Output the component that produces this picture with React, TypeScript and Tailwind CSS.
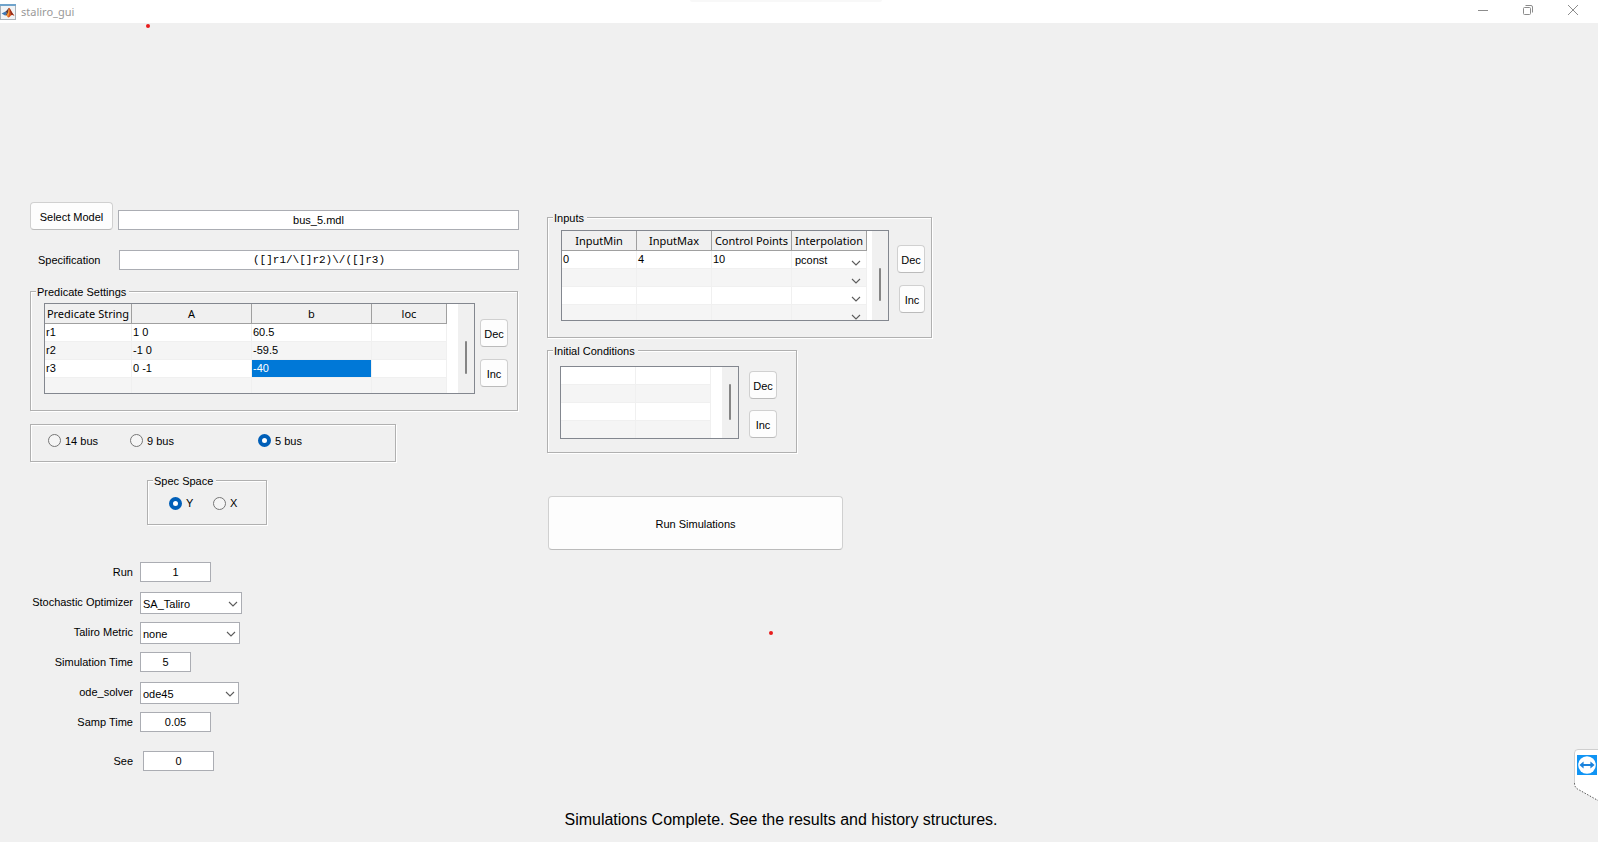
import { useState, type ReactNode } from "react";

const cx = (...parts: (string | false | undefined)[]) => parts.filter(Boolean).join(" ");

function Chevron({ className }: { className?: string }) {
  return (
    <svg viewBox="0 0 10 6" aria-hidden="true" className={cx("pointer-events-none h-[6px] w-[10px]", className)}>
      <path d="M1 1 L5 5 L9 1" fill="none" stroke="#5c5c5c" strokeWidth="1.1" />
    </svg>
  );
}

function PushButton({ children, className, label }: { children: ReactNode; className: string; label?: string }) {
  return (
    <button
      type="button"
      aria-label={label}
      className={cx(
        "shrink-0 rounded-[4px] border border-[#d0d0d0] border-b-[#bbbbbb] bg-[#fdfdfd] pt-[2px] whitespace-nowrap hover:bg-[#f5faff]",
        className,
      )}
    >
      {children}
    </button>
  );
}

function Panel({ title, className, children }: { title?: string; className: string; children: ReactNode }) {
  return (
    <fieldset
      className={cx(
        "min-w-0 border border-[#b0b0b0] shadow-[1px_1px_0_#ffffff,inset_1px_1px_0_#ffffff]",
        className,
      )}
    >
      {title && <legend className="ml-[5px] bg-[#f0f0f0] pt-[2px] pr-[3px] pl-px leading-4">{title}</legend>}
      {children}
    </fieldset>
  );
}

function Steppers({ name, className, incClass }: { name: string; className: string; incClass?: string }) {
  return (
    <div className={cx("flex flex-col items-end", className)}>
      <PushButton label={`Dec ${name}`} className="h-7 w-7">Dec</PushButton>
      <PushButton label={`Inc ${name}`} className={cx("h-7", incClass ?? "w-7")}>Inc</PushButton>
    </div>
  );
}

function TableFrame({ className, thumb, children }: { className: string; thumb: string; children: ReactNode }) {
  return (
    <div className={cx("flex shrink-0 overflow-hidden border border-[#83878f] bg-white", className)}>
      {children}
      <div className="ml-auto flex w-4 justify-center bg-[#f0f0f0]">
        <div className={cx("w-[2px] rounded-full bg-[#858585]", thumb)} />
      </div>
    </div>
  );
}

const TH =
  "h-5 overflow-hidden border-r border-b border-[#a0a0a0] bg-[#f0f0f0] p-0 pt-px text-center font-['Noto_Sans','Open_Sans',sans-serif] text-[11px] leading-[18px] font-normal whitespace-nowrap";
const TD = "h-[18px] border-r border-b border-[#f0f0f0] p-0 pl-px leading-[17px] whitespace-nowrap";

const predicates = [
  ["r1", "1 0", "60.5", ""],
  ["r2", "-1 0", "-59.5", ""],
  ["r3", "0 -1", "-40", ""],
  ["", "", "", ""],
];

function PredicateTable() {
  const [selected, setSelected] = useState("2-2");
  return (
    <table className="w-[402px] table-fixed border-separate border-spacing-0 self-start">
      <colgroup>
        <col className="w-[87px]" />
        <col className="w-[120px]" />
        <col className="w-[120px]" />
        <col className="w-[75px]" />
      </colgroup>
      <thead>
        <tr>
          {["Predicate String", "A", "b", "loc"].map((h) => (
            <th key={h} scope="col" className={TH}>{h}</th>
          ))}
        </tr>
      </thead>
      <tbody>
        {predicates.map((row, r) => (
          <tr key={r} className="odd:bg-white even:bg-[#f5f5f5]">
            {row.map((value, c) => {
              const key = `${r}-${c}`;
              return (
                <td
                  key={key}
                  onClick={() => setSelected(key)}
                  className={cx(TD, "bg-clip-padding", selected === key && "bg-[#0078d7] text-white")}
                >
                  {value}
                </td>
              );
            })}
          </tr>
        ))}
      </tbody>
    </table>
  );
}

const inputRows = [
  ["0", "4", "10", "pconst"],
  ["", "", "", ""],
  ["", "", "", ""],
  ["", "", "", ""],
];

function InputsTable() {
  return (
    <table className="w-[305px] table-fixed border-separate border-spacing-0 self-start">
      <colgroup>
        <col className="w-[75px]" />
        <col className="w-[75px]" />
        <col className="w-[80px]" />
        <col className="w-[75px]" />
      </colgroup>
      <thead>
        <tr>
          {["InputMin", "InputMax", "Control Points", "Interpolation"].map((h) => (
            <th key={h} scope="col" className={TH}>{h}</th>
          ))}
        </tr>
      </thead>
      <tbody>
        {inputRows.map((row, r) => (
          <tr key={r} className="odd:bg-white even:bg-[#f5f5f5]">
            {row.slice(0, 3).map((value, c) => (
              <td key={c} className={TD}>{value}</td>
            ))}
            <td className={TD}>
              <div className="relative">
                <select
                  aria-label={`Interpolation ${r + 1}`}
                  defaultValue={row[3]}
                  className="block h-[17px] w-full appearance-none bg-transparent pt-px pl-[2px] outline-none"
                >
                  <option value={row[3]}>{row[3]}</option>
                  <option value="linear">linear</option>
                </select>
                <Chevron className="absolute right-[5px] bottom-[2px]" />
              </div>
            </td>
          </tr>
        ))}
      </tbody>
    </table>
  );
}

function ConditionsTable() {
  return (
    <table aria-label="Initial Conditions" className="w-[150px] table-fixed border-separate border-spacing-0 self-start">
      <tbody>
        {[0, 1, 2, 3].map((r) => (
          <tr key={r} className="odd:bg-white even:bg-[#f5f5f5]">
            <td className={TD} />
            <td className={TD} />
          </tr>
        ))}
      </tbody>
    </table>
  );
}

function Radio({ name, label, checked, className }: { name: string; label: string; checked?: boolean; className?: string }) {
  return (
    <label className={cx("flex items-center gap-1 leading-4", className)}>
      <input
        type="radio"
        name={name}
        defaultChecked={checked}
        className="h-[13px] w-[13px] appearance-none rounded-full border border-[#767676] bg-[#f5f5f5] checked:border-4 checked:border-[#005fb8] checked:bg-white"
      />
      {label}
    </label>
  );
}

const FIELD = "h-5 min-w-0 border border-[#abadb3] bg-white text-center outline-none focus:border-[#0078d7]";

function FormRow({ id, label, children, className }: { id: string; label: string; children: ReactNode; className?: string }) {
  return (
    <div className={cx("flex h-[30px] items-start gap-[7px]", className)}>
      <label htmlFor={id} className="w-[103px] text-right leading-5 whitespace-nowrap">{label}</label>
      {children}
    </div>
  );
}

function Dropdown({ id, value, width }: { id: string; value: string; width: string }) {
  return (
    <div className={cx("relative", width)}>
      <select
        id={id}
        defaultValue={value}
        className="block h-[22px] w-full appearance-none border border-[#abadb3] bg-white pt-[2px] pl-[2px] outline-none focus:border-[#0078d7]"
      >
        <option value={value}>{value}</option>
      </select>
      <Chevron className="absolute top-[9px] right-1" />
    </div>
  );
}

function TitleBar() {
  return (
    <header className="relative flex h-[23px] shrink-0 items-center bg-white">
      <div className="absolute top-0 left-[690px] h-[2px] w-[192px] rounded-b bg-[#f8f8f8]" />
      <svg viewBox="0 0 16 16" className="h-4 w-4" aria-hidden="true">
        <rect x="0.5" y="0.5" width="15" height="15" fill="#f1f3f5" stroke="#a9b1b8" />
        <rect x="0" y="0" width="16" height="2" fill="#6fa3cb" />
        <path d="M1.6 9.6 L5.4 7.4 L7.2 9.2 L5 11.4 Z" fill="#3d78b4" />
        <path d="M5.4 7.4 C7 7.2 7.8 4.6 9 3.8 L8.4 9 L7 11 L5 11.4 L7 9.2 Z" fill="#5b3a3a" />
        <path d="M9 3.8 C10.4 4.2 11.8 8.8 14.4 11.8 C12.6 10.8 11.4 10.8 10.2 12.2 C9.4 13.2 8.6 13.6 8 13.6 C7.6 12.2 6.8 11.4 6 11.2 C8 10.4 8.4 6 9 3.8 Z" fill="#d9541e" />
        <path d="M9 4.4 C9.6 6.4 9.4 10 8 13.2 C7.6 12 7 11.4 6.4 11.2 C8 10 8.6 7 9 4.4 Z" fill="#f5a33a" />
        <path d="M9.6 4.6 C10.6 5.6 12.2 9.6 14.4 11.8 C12.6 10.8 11.8 10.6 11 11 Z" fill="#8f2a1c" />
      </svg>
      <h1 className="ml-[5px] font-['Noto_Sans','Open_Sans',sans-serif] text-[11px] leading-4 text-[#999999]">staliro_gui</h1>
      <div className="ml-auto flex items-center gap-[35px] pr-5 pb-[3px]">
        <button type="button" aria-label="Minimize" className="h-[10px] w-[10px]">
          <svg viewBox="0 0 10 10" className="h-full w-full"><path d="M0 5.5 H10" stroke="#8c8c8c" /></svg>
        </button>
        <button type="button" aria-label="Restore" className="h-[10px] w-[10px]">
          <svg viewBox="0 0 10 10" className="h-full w-full" fill="none" stroke="#8c8c8c">
            <rect x="0.5" y="2.5" width="7" height="7" rx="1" />
            <path d="M2.5 0.5 H8 Q9.5 0.5 9.5 2 V7.5" />
          </svg>
        </button>
        <button type="button" aria-label="Close" className="h-[10px] w-[10px]">
          <svg viewBox="0 0 10 10" className="h-full w-full"><path d="M0 0 L10 10 M10 0 L0 10" stroke="#8c8c8c" /></svg>
        </button>
      </div>
    </header>
  );
}

function RemoteTab() {
  return (
    <svg viewBox="0 0 24 52" className="absolute top-[749px] right-0 h-[52px] w-6" aria-hidden="true">
      <path d="M24 0.5 H4 Q0.5 0.5 0.5 4 V34 Q0.5 38 3.5 40 L24 51.5 Z" fill="#ffffff" />
      <path d="M24 0.5 H4 Q0.5 0.5 0.5 4 V34" fill="none" stroke="#c4c4c4" strokeWidth="0.8" />
      <path d="M0.5 34 Q0.5 38 3.5 40 L24 51.5" fill="none" stroke="#555555" strokeDasharray="1.5 1.5" />
      <rect x="3" y="6" width="20" height="20" fill="#1094f4" />
      <circle cx="13" cy="16" r="8.8" fill="#ffffff" />
      <path d="M5.4 16 L9.6 12.4 V15 H16.4 V12.4 L20.6 16 L16.4 19.6 V17 H9.6 V19.6 Z" fill="#1a82dc" />
    </svg>
  );
}

export default function App() {
  return (
    <div className="relative flex min-h-screen flex-col bg-[#f0f0f0] font-['Liberation_Sans',Arial,sans-serif] text-[11px] text-black">
      <TitleBar />
      <span className="absolute top-6 left-[146px] h-1 w-1 rounded-full bg-[#e81c1c]" />
      <span className="absolute top-[631px] left-[769px] h-1 w-1 rounded-full bg-[#e81c1c]" />
      <RemoteTab />

      <main className="flex flex-1 items-start gap-7 px-[30px] pt-[179px]">
        <section className="w-full max-w-[489px]">
          <div className="flex items-end gap-[5px]">
            <PushButton className="h-7 w-[83px]">Select Model</PushButton>
            <input aria-label="Model" defaultValue="bus_5.mdl" className={cx(FIELD, "flex-1")} />
          </div>
          <div className="mt-5 flex items-center pl-2">
            <label htmlFor="spec" className="w-[81px] leading-5">Specification</label>
            <input
              id="spec"
              defaultValue="([]r1/\[]r2)\/([]r3)"
              className={cx(FIELD, "flex-1 font-['Liberation_Mono',monospace]")}
            />
          </div>

          <Panel title="Predicate Settings" className="mt-3 mr-px">
            <div className="flex gap-[5px] pt-[3px] pb-4 pl-[13px]">
              <TableFrame className="h-[91px] w-[431px]" thumb="mt-[37px] h-[33px]">
                <PredicateTable />
              </TableFrame>
              <Steppers name="predicates" className="gap-3 pt-4" />
            </div>
          </Panel>

          <Panel className="mt-[13px] w-[366px]">
            <div className="flex h-9 items-center pb-[5px] pl-[17px]">
              <Radio name="bus" label="14 bus" className="w-[82px]" />
              <Radio name="bus" label="9 bus" className="w-32" />
              <Radio name="bus" label="5 bus" checked />
            </div>
          </Panel>

          <Panel title="Spec Space" className="mt-[9px] ml-[117px] w-[120px]">
            <div className="flex h-[35px] items-start pt-[6px] pl-[21px]">
              <Radio name="space" label="Y" checked className="w-11" />
              <Radio name="space" label="X" />
            </div>
          </Panel>

          <form className="mt-[37px]" onSubmit={(e) => e.preventDefault()}>
            <FormRow id="run" label="Run">
              <input id="run" defaultValue="1" className={cx(FIELD, "w-[71px]")} />
            </FormRow>
            <FormRow id="optimizer" label="Stochastic Optimizer">
              <Dropdown id="optimizer" value="SA_Taliro" width="w-[102px]" />
            </FormRow>
            <FormRow id="metric" label="Taliro Metric">
              <Dropdown id="metric" value="none" width="w-[100px]" />
            </FormRow>
            <FormRow id="simtime" label="Simulation Time">
              <input id="simtime" defaultValue="5" className={cx(FIELD, "w-[51px]")} />
            </FormRow>
            <FormRow id="solver" label="ode_solver">
              <Dropdown id="solver" value="ode45" width="w-[99px]" />
            </FormRow>
            <FormRow id="samp" label="Samp Time">
              <input id="samp" defaultValue="0.05" className={cx(FIELD, "w-[71px]")} />
            </FormRow>
            <FormRow id="see" label="See" className="mt-[9px] gap-[10px]">
              <input id="see" defaultValue="0" className={cx(FIELD, "w-[71px]")} />
            </FormRow>
          </form>
        </section>

        <section className="w-full max-w-[385px] pt-[6px]">
          <Panel title="Inputs" className="w-full">
            <div className="flex gap-2 pt-1 pb-4 pl-[13px]">
              <TableFrame className="h-[91px] w-[328px]" thumb="mt-[37px] h-[33px]">
                <InputsTable />
              </TableFrame>
              <Steppers name="inputs" className="gap-3 pt-[15px]" incClass="w-[26px]" />
            </div>
          </Panel>

          <Panel title="Initial Conditions" className="mt-[3px] w-[250px]">
            <div className="flex gap-[10px] pt-[7px] pb-[13px] pl-3">
              <TableFrame className="h-[73px] w-[179px]" thumb="mt-[17px] h-9">
                <ConditionsTable />
              </TableFrame>
              <Steppers name="conditions" className="gap-[11px] pt-[5px]" />
            </div>
          </Panel>

          <PushButton className="mt-[43px] ml-px h-[54px] w-[295px]">Run Simulations</PushButton>
        </section>
      </main>

      <footer className="pr-9 pb-[10px] text-center text-[16px] leading-6">
        <p role="status">Simulations Complete. See the results and history structures.</p>
      </footer>
    </div>
  );
}
